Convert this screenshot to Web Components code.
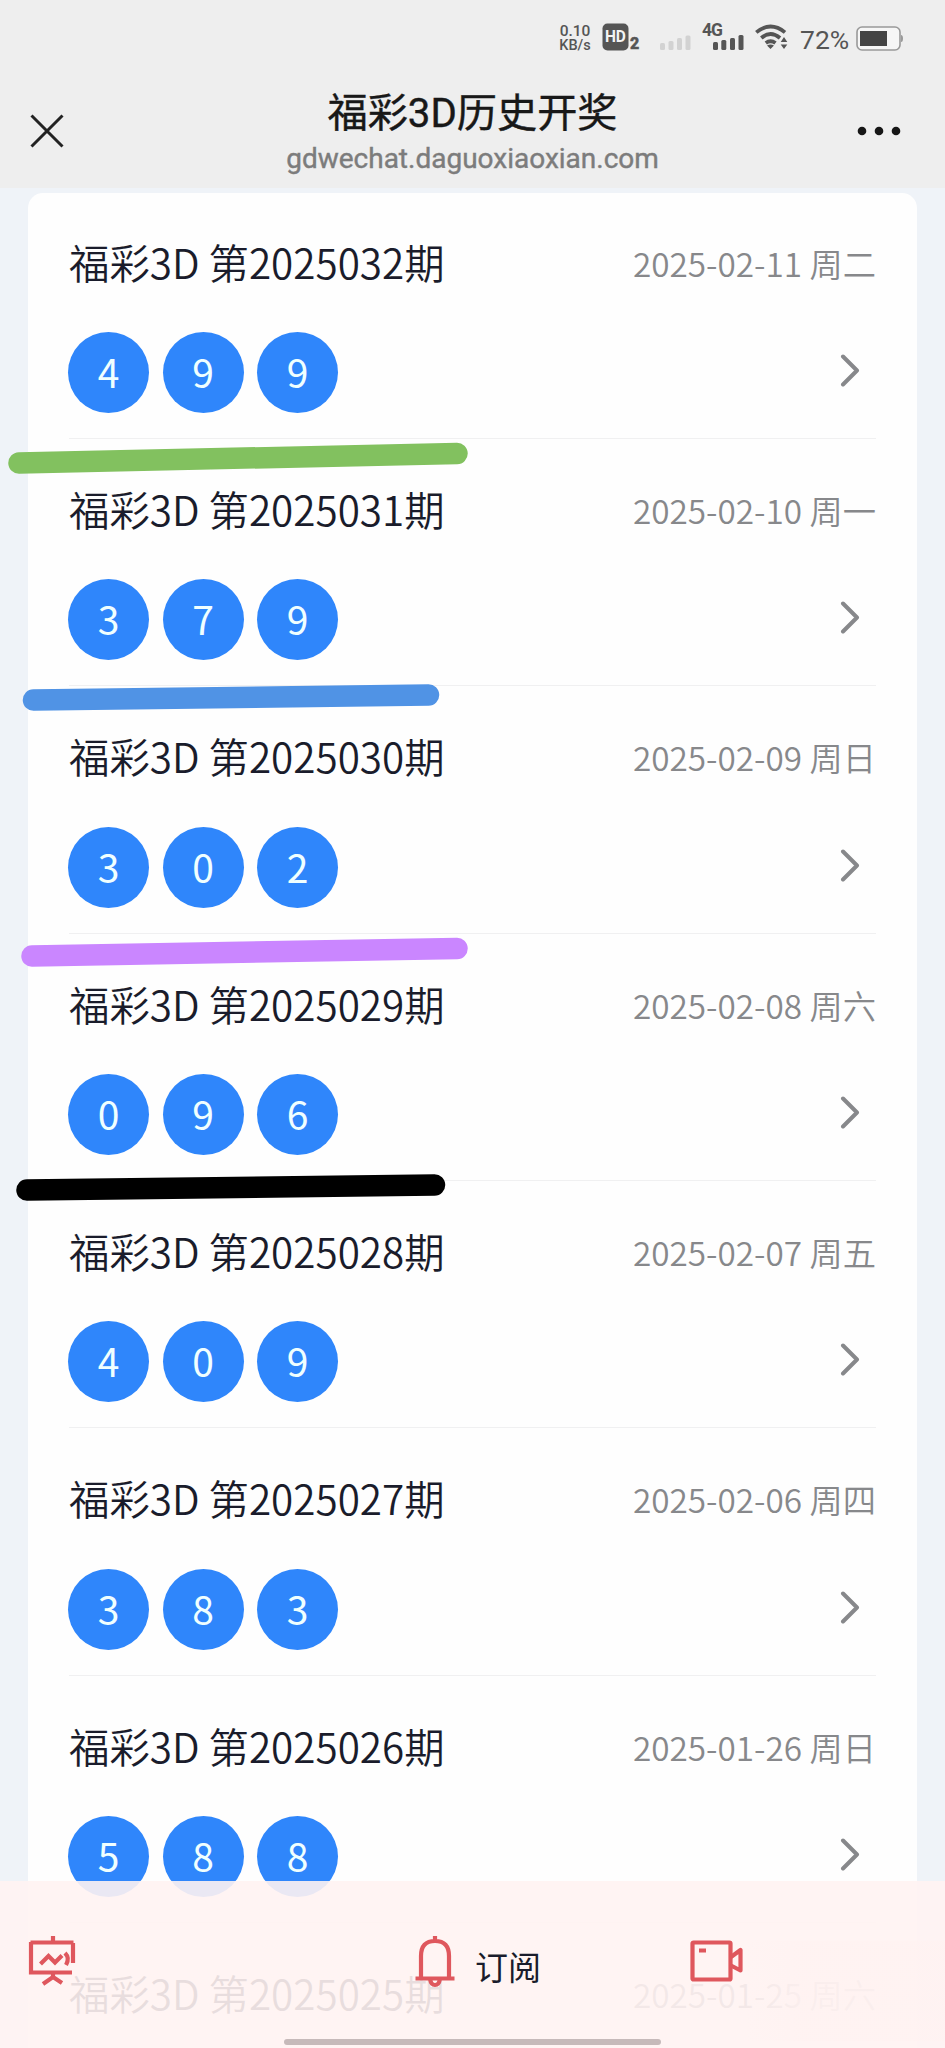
<!DOCTYPE html>
<html lang="zh-CN">
<head>
<meta charset="utf-8">
<meta name="viewport" content="width=device-width, initial-scale=1">
<title>福彩3D历史开奖</title>
<style>
  html, body {
    margin: 0;
    height: 2048px;
    overflow: hidden;
  }
  body {
    font-family: "Noto Sans CJK SC", "Noto Sans", sans-serif;
    font-weight: 350;
    color: #1a1c2b;
    background: #eff3f8;
  }
</style>
</head>
<body>
<history-page>
  <status-bar slot="top" rate="0.10" unit="KB/s" battery="72%"></status-bar>
  <page-header slot="top" url="gdwechat.daguoxiaoxian.com">福彩3D历史开奖</page-header>

  <draw-row balls="4,9,9" date="2025-02-11 周二">福彩3D 第2025032期</draw-row>
  <draw-row balls="3,7,9" date="2025-02-10 周一">福彩3D 第2025031期</draw-row>
  <draw-row balls="3,0,2" date="2025-02-09 周日">福彩3D 第2025030期</draw-row>
  <draw-row balls="0,9,6" date="2025-02-08 周六">福彩3D 第2025029期</draw-row>
  <draw-row balls="4,0,9" date="2025-02-07 周五">福彩3D 第2025028期</draw-row>
  <draw-row balls="3,8,3" date="2025-02-06 周四">福彩3D 第2025027期</draw-row>
  <draw-row balls="5,8,8" date="2025-01-26 周日">福彩3D 第2025026期</draw-row>
  <draw-row balls="" date="2025-01-25 周六">福彩3D 第2025025期</draw-row>

  <marker-lines slot="overlay"></marker-lines>
  <bottom-bar slot="overlay">订阅</bottom-bar>
</history-page>

<script>
/* page shell: grey top area, white card with the rows, overlays */
class HistoryPage extends HTMLElement {
  constructor() {
    super();
    this.attachShadow({ mode: 'open' }).innerHTML = `
      <style>
        :host {
          display: block;
          position: relative;
          height: 2048px;
          overflow: hidden;
        }
        header {
          height: 188px;
          background: #eeeeee;
        }
        main {
          display: flex;
          flex-direction: column;
          gap: 51.35px;
          margin: 5px 28px 0;
          padding: 50px 41px 0;
          background: #fefefe;
          border-radius: 15px 15px 0 0;
        }
      </style>
      <header><slot name="top"></slot></header>
      <main><slot></slot></main>
      <slot name="overlay"></slot>
    `;
  }
}

/* phone status bar */
class StatusBar extends HTMLElement {
  constructor() {
    super();
    this.attachShadow({ mode: 'open' }).innerHTML = `
      <style>
        :host {
          display: flex;
          justify-content: flex-end;
          align-items: center;
          box-sizing: border-box;
          height: 76px;
          padding-right: 41px;
          font-family: Roboto, sans-serif;
          font-weight: 400;
          color: #555;
        }
        svg {
          display: block;
          overflow: visible;
        }
        .rate {
          width: 32px;
          font-size: 15.5px;
          font-weight: 500;
          line-height: 14px;
          text-align: center;
          white-space: nowrap;
        }
        .unit { font-size: 14.5px; }
        .rate div + div { margin-top: 1px; }
        .hd { margin: -2px 0 0 11px; }
        .sim1 { margin: 10px 0 0 18px; }
        .sim2 { margin: -2px 0 0 11px; }
        .wifi { margin: -2px 0 0 11px; }
        .level {
          margin: 4px 6px 0 12px;
          font-size: 26.5px;
          width: 50px;
          line-height: 32px;
          white-space: nowrap;
        }
      </style>
      <div class="rate"><div class="num"></div><div class="unit"></div></div>
      <svg class="hd" width="40" height="30" viewBox="0 0 40 30">
        <rect x="0.5" y="1.500" width="26" height="27" rx="5" fill="#555"/>
        <text x="13.4" y="20.3" text-anchor="middle" font-size="16" font-weight="700" textLength="21" lengthAdjust="spacingAndGlyphs" fill="#f3f3f3">HD</text>
        <text x="28" y="27" font-size="16" font-weight="800" fill="#555" stroke="#555" stroke-width=".5">2</text>
      </svg>
      <svg class="sim1" width="31" height="16" viewBox="0 0 31 16" fill="#d2d2d2">
        <rect x="0" y="8" width="5" height="7" rx="1.5"/>
        <rect x="8.5" y="6" width="5" height="9" rx="1.5"/>
        <rect x="17" y="3" width="5" height="12" rx="1.5"/>
        <rect x="25.5" y="0.5" width="5" height="14.500" rx="1.5"/>
      </svg>
      <svg class="sim2" width="42" height="32" viewBox="0 -2 42 32" fill="#555">
        <text x="0" y="13" font-size="17.5" font-weight="700" textLength="21">4G</text>
        <rect x="11" y="19" width="5" height="8" rx="1.5"/>
        <rect x="19.300" y="17" width="5" height="10" rx="1.5"/>
        <rect x="28" y="15" width="5" height="12" rx="1.5"/>
        <rect x="36.500" y="12" width="5" height="15" rx="1.5"/>
      </svg>
      <svg class="wifi" width="33" height="26" viewBox="0 0 33 26" fill="none" stroke="#555" stroke-width="3.8">
        <path d="M1.300 8.400Q15.500 -3.400 30 8.400M6.300 14Q15.500 6 25 14M10.800 19Q15.500 15.400 20.500 19"/>
        <path d="M12 21.600Q15.500 19.600 19 21.600L15.500 25ZM29 13l3.300 5h-6.600zM29 25l3.300-4.500h-6.600z" fill="#555" stroke="none"/>
      </svg>
      <span class="level"></span>
      <svg width="48" height="25" viewBox="0 0 48 25">
        <rect x="1" y="1" width="43" height="23" rx="5" fill="#f6f6f6" stroke="#999" stroke-width="1.600"/>
        <rect x="4" y="5" width="27" height="15" fill="#444"/>
        <path d="M45 9q2 0 2 3.500t-2 3.500z" fill="#999"/>
      </svg>
    `;
  }

  connectedCallback() {
    this.shadowRoot.querySelector('.num').textContent = this.getAttribute('rate');
    this.shadowRoot.querySelector('.unit').textContent = this.getAttribute('unit');
    this.shadowRoot.querySelector('.level').textContent = this.getAttribute('battery');
  }
}

/* title bar with close and menu icons */
class PageHeader extends HTMLElement {
  constructor() {
    super();
    this.attachShadow({ mode: 'open' }).innerHTML = `
      <style>
        :host {
          display: grid;
          grid-template-columns: 1fr auto 1fr;
          align-items: center;
          height: 109px;
          padding: 0 44px 0 30px;
          font-family: Roboto, "Noto Sans CJK SC", sans-serif;
          font-weight: 400;
        }
        .titles {
          text-align: center;
          padding: 3px 0 0 14px;
        }
        .menu { justify-self: end; }
        h1 {
          margin: 0;
          font-size: 40.2px;
          font-weight: 400;
          line-height: 50px;
          color: #181818;
          -webkit-text-stroke: .4px #181818;
        }
        .url {
          font-size: 28px;
          line-height: 34px;
          margin-top: 3px;
          color: #7c7c7c;
          -webkit-text-stroke: .4px #7c7c7c;
        }
      </style>
      <svg width="34" height="34" viewBox="0 0 34 34" fill="none" stroke="#222" stroke-width="3">
        <path d="M1.500 1.500l31 31m0-31l-31 31"/>
      </svg>
      <div class="titles">
        <h1><slot></slot></h1>
        <div class="url"></div>
      </div>
      <svg class="menu" width="44" height="10" viewBox="0 0 44 10" fill="#161616">
        <circle cx="5" cy="5" r="4.300"/><circle cx="22" cy="5" r="4.300"/><circle cx="39" cy="5" r="4.300"/>
      </svg>
    `;
  }

  connectedCallback() {
    this.shadowRoot.querySelector('.url').textContent = this.getAttribute('url');
  }
}

/* single ball */
class DrawBall extends HTMLElement {
  constructor() {
    super();
    this.attachShadow({ mode: 'open' }).innerHTML = `
      <style>
        :host {
          display: flex;
          justify-content: center;
          width: 81px;
          height: 81px;
          border-radius: 50%;
          background: #2f86fb;
          color: #f0ffff;
          font-size: 39px;
          font-weight: 400;
          line-height: 79px;
        }
      </style>
      <slot></slot>
    `;
  }
}

/* one draw: issue, date and the winning balls */
class DrawRow extends HTMLElement {
  constructor() {
    super();
    this.attachShadow({ mode: 'open' }).innerHTML = `
      <style>
        :host {
          display: block;
          height: 195px;
          border-bottom: 1px solid #f0f0f1;
        }
        .head, .result {
          display: flex;
          justify-content: space-between;
          align-items: center;
        }
        .head {
          height: 37px;
          margin-bottom: 52px;
          white-space: nowrap;
        }
        .issue {
          font-size: 40.4px;
          margin-top: -1px;
        }
        .date {
          font-size: 33.3px;
          color: #87888b;
          margin-top: 1px;
        }
        .result { padding-right: 16px; }
        .result svg { margin-bottom: 3px; }
        .balls {
          display: flex;
          gap: 13.5px;
          margin-left: -1px;
          height: 81px;
        }
      </style>
      <div class="head">
        <span class="issue"><slot></slot></span>
        <span class="date"></span>
      </div>
      <div class="result">
        <div class="balls"></div>
        <svg width="20" height="34" viewBox="0 0 20 34" fill="none" stroke="#87888b" stroke-width="4" stroke-linecap="round" stroke-linejoin="round">
          <path d="M3 2.500l14 14L3 30.500"/>
        </svg>
      </div>
    `;
  }

  connectedCallback() {
    const balls = this.getAttribute('balls');
    this.shadowRoot.querySelector('.date').textContent = this.getAttribute('date');
    if (!balls) return;

    balls.split(',').forEach((number) => {
      const ball = document.createElement('draw-ball');
      ball.textContent = number;
      this.shadowRoot.querySelector('.balls').append(ball);
    });
  }
}

/* hand drawn marker strokes lying over the list */
class MarkerLines extends HTMLElement {
  constructor() {
    super();
    this.attachShadow({ mode: 'open' }).innerHTML = `
      <style>
        :host {
          position: absolute;
          inset: 0;
          pointer-events: none;
        }
      </style>
      <svg width="945" height="2048" viewBox="0 0 945 2048" stroke-width="21.500" stroke-linecap="round">
        <path d="M19 463L457 453.500" stroke="#82c15f"/>
        <path d="M33.500 700L428.500 695" stroke="#5093e5"/>
        <path d="M32 956L457 948.500" stroke="#ca86ff"/>
        <path d="M27 1190L434.500 1185" stroke="#000"/>
      </svg>
    `;
  }
}

/* translucent tab bar, the list shows through */
class BottomBar extends HTMLElement {
  constructor() {
    super();
    this.attachShadow({ mode: 'open' }).innerHTML = `
      <style>
        :host {
          position: absolute;
          left: 0;
          right: 0;
          bottom: 0;
          height: 167px;
          display: grid;
          grid-template-columns: 387px 275px 1fr;
          grid-template-rows: 158px 6px;
          box-sizing: border-box;
          padding-left: 28px;
          background:
            linear-gradient(90deg, transparent 745px, rgba(255, 242, 241, .6) 800px) 0 60px / 100% 100px no-repeat,
            rgba(255, 243, 242, .9);
        }
        .item {
          display: flex;
          align-items: flex-start;
          padding-top: 55px;
          font-size: 33px;
          line-height: 40px;
        }
        .label {
          margin: 10px 0 0 20px;
          font-weight: 400;
        }
        svg {
          flex: none;
          fill: none;
          stroke: #df575d;
          stroke-width: 4.2;
        }
        .home {
          width: 377px;
          height: 6px;
          border-radius: 3px;
          background: #c6baba;
          grid-column: 1 / -1;
          margin-left: 256px;
        }
      </style>
      <div class="item">
        <svg width="48" height="52" viewBox="0 0 48 52">
          <path d="M25 0v6M2.500 6.500h43M3 6v30.500h41M45 7v20M12.500 28l8-8 6.500 6.500 7-7M37 17q5 5 1 12M25 37v5M15 48l10-7 9 6"/>
        </svg>
      </div>
      <div class="item">
        <svg width="40" height="52" viewBox="0 0 40 52">
          <path d="M20 0v5M6 42V20Q6 5 20 5T34 20V42M0.500 42.500h39M15 43q1 6 5 6t5-6"/>
        </svg>
        <span class="label"><slot></slot></span>
      </div>
      <div class="item">
        <svg width="53" height="52" viewBox="0 0 53 52" stroke-linejoin="round">
          <rect x="2.500" y="6.500" width="38" height="37" rx="1"/>
          <path d="M9 14.500h7M41 21l9.500-7v20.500l-9.500-5"/>
        </svg>
      </div>
      <div class="home"></div>
    `;
  }
}

customElements.define('history-page', HistoryPage);
customElements.define('status-bar', StatusBar);
customElements.define('page-header', PageHeader);
customElements.define('draw-ball', DrawBall);
customElements.define('draw-row', DrawRow);
customElements.define('marker-lines', MarkerLines);
customElements.define('bottom-bar', BottomBar);
</script>
</body>
</html>
